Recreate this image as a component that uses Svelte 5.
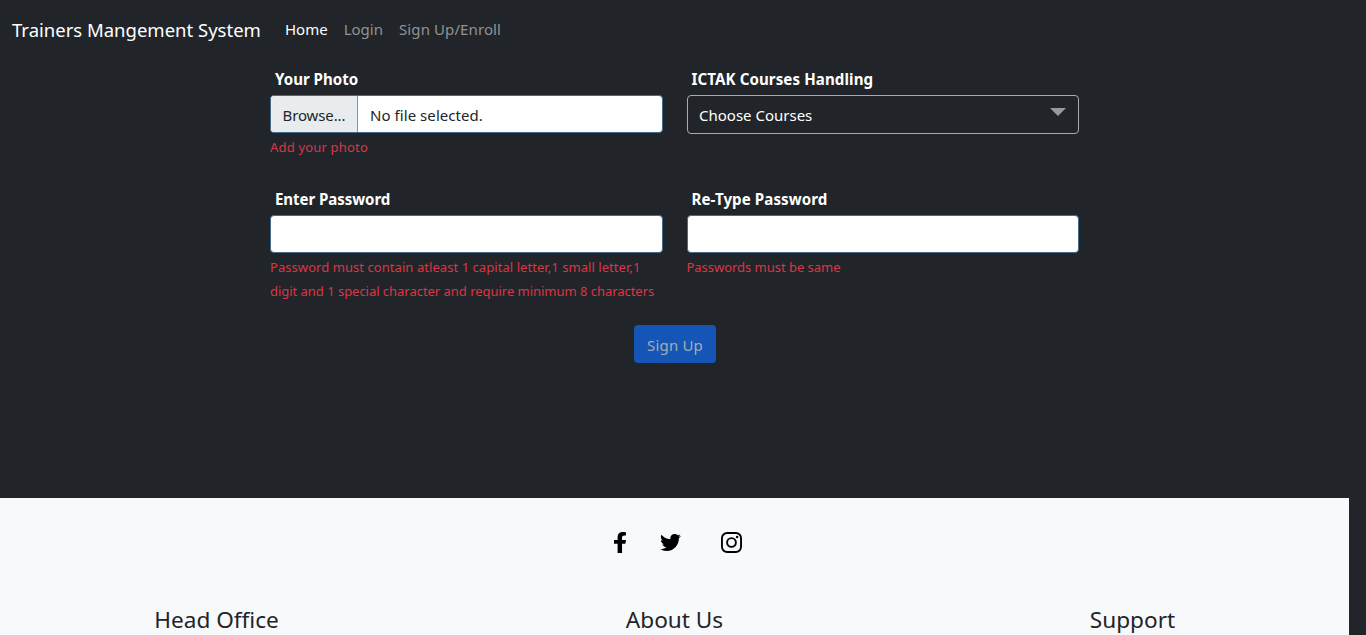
<script>
  const links = [
    { text: 'Home', active: true },
    { text: 'Login', active: false },
    { text: 'Sign Up/Enroll', active: false, wide: true }
  ];
  const fields = [
    { id: 'photo', label: 'Your Photo', kind: 'file', error: 'Add your photo' },
    { id: 'courses', label: 'ICTAK Courses Handling', kind: 'select', error: '' },
    {
      id: 'password',
      label: 'Enter Password',
      kind: 'password',
      error:
        'Password must contain atleast 1 capital letter,1 small letter,1 digit and 1 special character and require minimum 8 characters'
    },
    { id: 'repeat', label: 'Re-Type Password', kind: 'password', error: 'Passwords must be same' }
  ];
</script>

<div class="page">
  <nav>
    <a class="brand" href="#home">Trainers Mangement System</a>
    <div class="links">
      {#each links as link}
        <a class:active={link.active} class:wide={link.wide} href="#top">{link.text}</a>
      {/each}
    </div>
  </nav>

  <form>
    <div class="grid">
      {#each fields as field}
        <div class="field {field.id}">
          <label for={field.id}>{field.label}</label>
          {#if field.kind === 'file'}
            <div class="control file" id={field.id}>
              <span class="browse">Browse...</span>
              <span class="chosen">No file selected.</span>
            </div>
          {:else if field.kind === 'select'}
            <div class="select" id={field.id}>
              <span>Choose Courses</span>
              <svg width="16" height="8" viewBox="0 0 16 8"><path d="M0 0h16L8 8z" fill="#999" /></svg>
            </div>
          {:else}
            <input class="control" id={field.id} type="password" />
          {/if}
          {#if field.error}<p class="error">{field.error}</p>{/if}
        </div>
      {/each}
    </div>
    <button type="button" disabled>Sign Up</button>
  </form>

  <footer>
    <div class="social">
      <svg width="12" height="21" viewBox="22.9 0 270.5 512" preserveAspectRatio="none">
        <path d="M279.14 288l14.22-92.66h-88.91v-60.13c0-25.35 12.42-50.06 52.24-50.06h36V6.26S260.43 0 225.36 0c-73.22 0-121.08 44.38-121.08 124.72v70.62H22.89V288h81.39v224h100.17V288z" />
      </svg>
      <svg class="bird" width="21" height="21" viewBox="0 0 512 512">
        <path d="M459.37 151.716c.325 4.548.325 9.097.325 13.645 0 138.72-105.583 298.558-298.558 298.558-59.452 0-114.68-17.219-161.137-47.106 8.447.974 16.568 1.299 25.34 1.299 49.055 0 94.213-16.568 130.274-44.832-46.132-.975-84.792-31.188-98.112-72.772 6.498.974 12.995 1.624 19.818 1.624 9.421 0 18.843-1.3 27.614-3.573-48.081-9.747-84.143-51.98-84.143-102.985v-1.299c13.969 7.797 30.214 12.67 47.431 13.319-28.264-18.843-46.781-51.005-46.781-87.391 0-19.492 5.197-37.36 14.294-52.954 51.655 63.675 129.3 105.258 216.365 109.807-1.624-7.797-2.599-15.918-2.599-24.04 0-57.828 46.782-104.934 104.934-104.934 30.213 0 57.502 12.67 76.67 33.137 23.715-4.548 46.456-13.32 66.599-25.34-7.798 24.366-24.366 44.833-46.132 57.827 21.117-2.273 41.584-8.122 60.426-16.243-14.292 20.791-32.161 39.308-52.628 54.253z" />
      </svg>
      <svg class="camera" width="21" height="21" viewBox="0 0 21 21">
        <rect x=".95" y=".95" width="19.1" height="19.1" rx="5.2" fill="none" stroke="#000" stroke-width="1.9" />
        <circle cx="10.5" cy="10.5" r="4.4" fill="none" stroke="#000" stroke-width="1.9" />
        <circle cx="16.1" cy="4.9" r="1.25" />
      </svg>
    </div>
    <div class="columns">
      <h4>Head Office</h4>
      <h4>About Us</h4>
      <h4>Support</h4>
    </div>
  </footer>
</div>

<style>
  :global(body) {
    margin: 0;
    background: #212529;
    overflow: hidden;
  }
  * {
    box-sizing: border-box;
  }
  .page {
    width: 1349px;
    height: 635px;
    overflow: hidden;
    display: flex;
    flex-direction: column;
    font: 15px/24px "Noto Sans", "Segoe UI", sans-serif;
    color: #fff;
  }
  nav {
    display: flex;
    align-items: center;
    height: 59px;
    flex: none;
    padding-left: 12px;
  }
  nav a {
    color: #909294;
    text-decoration: none;
  }
  nav .brand {
    width: 273px;
    font-size: 18.5px;
    color: #fff;
    white-space: nowrap;
  }
  .links {
    display: flex;
    gap: 16px;
    padding-bottom: 2px;
  }
  .links .active {
    color: #fff;
  }
  .links .wide {
    letter-spacing: 0.1px;
  }
  form {
    height: 439px;
    flex: none;
    display: flex;
    flex-direction: column;
    align-items: center;
    padding-top: 8px;
  }
  .grid {
    display: grid;
    grid-template-columns: 1fr 1fr;
    grid-template-rows: 120px 120px;
    column-gap: 24px;
    width: 809px;
  }
  .field {
    display: flex;
    flex-direction: column;
  }
  label {
    height: 28px;
    padding-left: 5px;
    font-size: 15.1px;
    font-weight: 700;
  }
  .courses label,
  .repeat label {
    letter-spacing: 0.09px;
  }
  .password label {
    letter-spacing: -0.08px;
  }
  .control {
    height: 38px;
    width: 100%;
    border: 1px solid #466b8a;
    border-radius: 4px;
    background: #fff;
    color: #212529;
    outline: none;
  }
  .file {
    display: flex;
    overflow: hidden;
  }
  .file span {
    padding: 7px 12px 0;
  }
  .file .browse {
    width: 87px;
    padding-left: 11.5px;
    padding-right: 0;
    background: #e9ecef;
    border-right: 1px solid #7895aa;
    letter-spacing: -0.12px;
  }
  .file .chosen {
    letter-spacing: 0.06px;
  }
  .select {
    height: 39px;
    display: flex;
    justify-content: space-between;
    border: 1px solid #aaa;
    border-radius: 4px;
    padding: 7px 12px 0 11.5px;
  }
  .select svg {
    margin-top: 5px;
  }
  .error {
    margin: 2px 0 0;
    font-size: 13px;
    letter-spacing: -0.03px;
    color: #dc3545;
  }
  .photo .error {
    letter-spacing: 0.18px;
  }
  .password .error::first-line {
    letter-spacing: 0.06px;
  }
  button {
    width: 82px;
    height: 38px;
    margin-top: 18px;
    padding: 1px 0 0 1px;
    border: 0;
    border-radius: 4px;
    background: #1455b5;
    color: #a5adb8;
    font: inherit;
    letter-spacing: 0.2px;
  }
  footer {
    flex: 1;
    background: #f8f9fa;
    color: #212529;
  }
  .social {
    display: flex;
    height: 89px;
    padding: 34px 0 0 613.5px;
  }
  .social svg {
    flex: none;
  }
  .social .bird {
    margin-left: 34.5px;
  }
  .social .camera {
    margin-left: 40px;
  }
  .columns {
    display: grid;
    grid-template-columns: 433px 483px 433px;
    text-align: center;
    padding-top: 18px;
  }
  h4 {
    margin: 0;
    font-size: 22.6px;
    line-height: 29px;
    font-weight: 400;
  }
</style>
